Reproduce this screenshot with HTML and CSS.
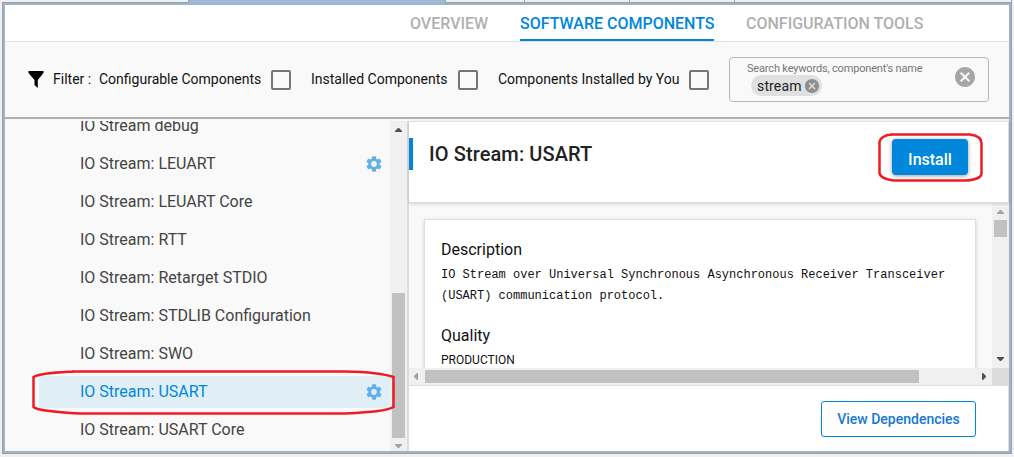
FILE: index.html
```html
<!DOCTYPE html>
<html lang="en">
<head>
<meta charset="utf-8">
<title>Software Components</title>
<link rel="stylesheet" href="styles.css">
</head>
<body>
<svg width="0" height="0" class="defs">
  <symbol id="gear" viewBox="2 2 20 20"><path d="M19.14 12.94c.04-.3.06-.61.06-.94 0-.32-.02-.64-.07-.94l2.03-1.58c.18-.14.23-.41.12-.61l-1.92-3.32c-.12-.22-.37-.29-.59-.22l-2.39.96c-.5-.38-1.03-.7-1.62-.94l-.36-2.54c-.04-.24-.24-.41-.48-.41h-3.84c-.24 0-.43.17-.47.41l-.36 2.54c-.59.24-1.13.57-1.62.94l-2.39-.96c-.22-.08-.47 0-.59.22L2.74 8.87c-.12.21-.08.47.12.61l2.03 1.58c-.05.3-.09.63-.09.94s.02.64.07.94l-2.03 1.58c-.18.14-.23.41-.12.61l1.92 3.32c.12.22.37.29.59.22l2.39-.96c.5.38 1.03.7 1.62.94l.36 2.54c.05.24.24.41.48.41h3.84c.24 0 .44-.17.47-.41l.36-2.54c.59-.24 1.13-.56 1.62-.94l2.39.96c.22.08.47 0 .59-.22l1.92-3.32c.12-.22.07-.47-.12-.61l-2.01-1.58zM12 15.6c-1.98 0-3.6-1.62-3.6-3.6s1.62-3.6 3.6-3.6 3.6 1.62 3.6 3.6-1.62 3.6-3.6 3.6z"/></symbol>
  <symbol id="cancel" viewBox="2 2 20 20"><path d="M12 2C6.47 2 2 6.47 2 12s4.47 10 10 10 10-4.47 10-10S17.53 2 12 2zm5 13.59L15.59 17 12 13.41 8.41 17 7 15.59 10.59 12 7 8.41 8.41 7 12 10.59 15.59 7 17 8.41 13.41 12 17 15.59z"/></symbol>
</svg>
<div class="tabstrip"><i class="t1"></i><i class="t2"></i><i class="t3"></i><i class="t4"></i><i class="t5"></i><i class="t6"></i></div>
<div class="window">
  <nav class="nav">
    <a class="tab overview">OVERVIEW</a>
    <a class="tab active">SOFTWARE COMPONENTS</a>
    <a class="tab config">CONFIGURATION TOOLS</a>
  </nav>
  <section class="filters">
    <svg class="funnel" width="16" height="17" viewBox="0 0 16 17"><path d="M.5 0h15v2L9.800 9v8L6.500 14V9L.5 2z"/></svg>
    <span class="label f0">Filter :</span>
    <span class="label f1">Configurable Components</span><span class="box"></span>
    <span class="label f2">Installed Components</span><span class="box"></span>
    <span class="label f3">Components Installed by You</span><span class="box"></span>
    <div class="search">
      <div class="field">
        <span class="hint">Search keywords, component's name</span>
        <span class="chip">stream<svg width="14" height="14"><use href="#cancel"/></svg></span>
      </div>
      <svg class="clear" width="20" height="20"><use href="#cancel"/></svg>
    </div>
  </section>
  <div class="content">
    <aside class="tree">
      <div class="rows">
        <div class="row"><span>IO Stream debug</span></div>
        <div class="row"><span>IO Stream: LEUART</span><svg width="16" height="16"><use href="#gear"/></svg></div>
        <div class="row"><span>IO Stream: LEUART Core</span></div>
        <div class="row"><span>IO Stream: RTT</span></div>
        <div class="row"><span>IO Stream: Retarget STDIO</span></div>
        <div class="row"><span>IO Stream: STDLIB Configuration</span></div>
        <div class="row"><span>IO Stream: SWO</span></div>
        <div class="row selected"><span>IO Stream: USART</span><svg width="16" height="16"><use href="#gear"/></svg></div>
        <div class="row"><span>IO Stream: USART Core</span></div>
      </div>
      <div class="vbar">
        <svg width="17" height="17" fill="#505050"><path d="M5 11v-1l3-3h1l3 3v1z"/></svg>
        <div class="thumb tree-thumb"></div>
        <svg width="17" height="13" fill="#a3a3a3"><path d="M5 6v1l3 3h1l3-3v-1z"/></svg>
      </div>
    </aside>
    <main class="detail">
      <header class="title">
        <h1>IO Stream: USART</h1>
        <button class="install">Install</button>
      </header>
      <div class="scroller">
        <div class="view">
          <article class="card">
            <h2>Description</h2>
            <p class="mono">IO Stream over Universal Synchronous Asynchronous Receiver Transceiver<br>(USART) communication protocol.</p>
            <h2 class="quality">Quality</h2>
            <p class="value">PRODUCTION</p>
          </article>
        </div>
        <div class="vbar">
          <svg width="17" height="17" fill="#a3a3a3"><path d="M5 11v-1l3-3h1l3 3v1z"/></svg>
          <div class="thumb view-thumb"></div>
          <svg class="end" width="17" height="17" fill="#505050"><path d="M5 6v1l3 3h1l3-3v-1z"/></svg>
        </div>
        <div class="hbar">
          <svg width="17" height="17" fill="#a3a3a3"><path d="M9 5h-1l-3 3v1l3 3h1z"/></svg>
          <div class="hthumb"></div>
          <svg class="right" width="17" height="17" fill="#505050"><path d="M7 5h1l3 3v1l-3 3h-1z"/></svg>
        </div>
        <div class="corner"></div>
      </div>
      <footer class="footer"><button class="deps">View Dependencies</button></footer>
    </main>
  </div>
</div>
<svg class="marks" width="1014" height="457" viewBox="0 0 1014 457">
  <path d="M890 134.500H970C977 135.500 981.500 138 981.500 143V174C981 177 976 180 966 180.500H894C886 179.500 880 177 879.500 173V142C880 138 885 134.500 893 134.500"/>
  <path d="M72 371.500H345C370 372 385 374 393.500 377V407C387 411 370 412 345 413.500H80C60 412.500 38 411 33.500 407V377C40 373 57 372.500 74 371.500"/>
</svg>
</body>
</html>
```

FILE: styles.css
```css
* { box-sizing: border-box; }
body { margin: 0; width: 1014px; height: 457px; overflow: hidden; background: #f0f0f0; font-family: Roboto, sans-serif; color: #222; }
.defs { display: block; position: absolute; }
.tabstrip { display: flex; height: 3px; margin: 0 2px; }
.tabstrip i { height: 3px; border-bottom: 1px solid #a0a0a0; border-right: 1px solid #a0a0a0; }
.tabstrip .t1 { width: 187px; }
.tabstrip .t2 { width: 257px; background: #9fbad5; border-color: #9fbad5; border-right-color: #a0a0a0; }
.tabstrip .t3 { width: 79px; }
.tabstrip .t4 { width: 105px; }
.tabstrip .t5 { width: 105px; }
.tabstrip .t6 { flex: 1; }
.window { width: 1010px; height: 451px; margin-left: 2px; padding: 2px 3px 3px; border-bottom: 1px solid #a0a0a0; background: linear-gradient(90deg, #a0a0a0 1px, #99b4d1 1px, #99b4d1 1009px, #a0a0a0 1009px); }
.nav { display: flex; height: 37px; background: #fff; border-bottom: 1px solid #e0e0e0; padding-left: 405px; }
.tab { height: 36px; line-height: 37px; font-size: 16px; font-weight: 500; color: #b0b0b0; white-space: nowrap; }
.overview { width: 110px; }
.active { width: 194px; color: #0087dc; border-bottom: 2px solid #0087dc; }
.config { margin-left: 32px; }
.filters { display: flex; height: 77px; background: #f9f9f9; border-bottom: 2px solid #b0b0b0; padding-left: 23px; }
.funnel { margin-top: 29px; }
.label { font-size: 14px; line-height: 16px; margin-top: 29px; color: #111; white-space: nowrap; }
.f0 { width: 46px; margin-left: 9px; }
.f1 { width: 172px; }
.f2 { width: 147px; margin-left: 20px; }
.f3 { width: 191px; margin-left: 20px; }
.box { width: 20px; height: 20px; margin-top: 28px; border: 2px solid #757575; border-radius: 2px; background: #fafafa; }
.search { display: flex; width: 260px; height: 45px; margin: 15px 0 0 20px; border: 1px solid #b8b8b8; border-radius: 4px; }
.field { display: flex; flex-direction: column; align-items: flex-start; width: 225px; padding: 4px 0 0 17px; }
.hint { font-size: 11px; line-height: 13px; letter-spacing: -.17px; color: #777; white-space: nowrap; }
.chip { display: flex; align-items: center; width: 71px; height: 21px; margin-left: 4px; padding-left: 6px; border-radius: 11px; background: #e0e0e0; font-size: 14px; letter-spacing: .15px; color: #222; }
.chip svg { margin-left: 3px; fill: #8e8e8e; }
.clear { margin-top: 9px; fill: #a6a6a6; }
.content { display: flex; height: 332px; background: #f9f9f9; }
.tree { display: flex; width: 404px; height: 330px; margin-top: 2px; overflow: hidden; border-right: 2px solid #dcdcdc; }
.rows { display: flex; flex-direction: column; gap: 6px; width: 385px; margin-top: -11px; padding-left: 34px; }
.row { display: flex; justify-content: space-between; flex: none; height: 32px; padding: 0 8px 0 41px; font-size: 16px; line-height: 31px; color: #444; white-space: nowrap; }
.row svg { margin-top: 8px; fill: #62b1e6; }
.selected { background: #e0eef6; color: #0087dc; }
.vbar { display: flex; flex-direction: column; width: 17px; background: #f0f0f0; }
.vbar svg, .hbar svg { flex: none; }
.thumb { width: 13px; margin-left: 2px; background: #c1c1c1; }
.tree-thumb { height: 145px; margin-top: 155px; }
.detail { width: 600px; height: 330px; margin-top: 2px; }
.title { display: flex; justify-content: space-between; position: relative; width: 600px; height: 82px; background: #fff; border: solid #dedede; border-width: 1px 1px 1px 0; box-shadow: 0 1px 3px rgba(0,0,0,.16); padding: 16px 40px 0 0; }
.title h1 { height: 32px; margin: 0; padding-left: 16px; border-left: 4px solid #0087dc; font-size: 20px; line-height: 32px; font-weight: 500; letter-spacing: .1px; }
.install { width: 76px; height: 36px; margin-top: 1px; padding: 5px 0 0; border: 0; border-radius: 4px; background: #0087dc; box-shadow: 0 1px 4px rgba(0,0,0,.4); color: #fff; font: 500 16px Roboto, sans-serif; }
.scroller { display: grid; grid-template: 165px 17px / 583px 17px; }
.view { overflow: hidden; padding: 16px 16px 0 15px; }
.card { width: 552px; height: 230px; padding: 20px 16px; background: #fff; border: 1px solid #dedede; box-shadow: 0 1px 4px rgba(0,0,0,.16); }
.card h2 { margin: 0; font-size: 16px; line-height: 20px; font-weight: 400; color: #111; }
.mono { margin: 5px 0 0; font: 12px/21px "Liberation Mono", monospace; color: #111; white-space: nowrap; }
.card .quality { margin-top: 19px; }
.value { margin: 6px 0 0; font-size: 12px; line-height: 16px; color: #111; }
.view-thumb { height: 17px; }
.end { margin-top: auto; }
.hbar { display: flex; background: #f0f0f0; }
.hthumb { width: 494px; height: 13px; margin: 2px 0 0 -1px; background: #c1c1c1; }
.right { margin-left: auto; }
.corner { background: #dcdcdc; }
.footer { display: flex; justify-content: flex-end; height: 66px; background: #fff; border-top: 1px solid #dedede; border-right: 1px solid #dedede; padding: 15px 32px 0 0; }
.deps { width: 155px; height: 36px; padding: 0 0 1px; border: 1px solid #0087dc; border-radius: 3px; background: #fff; color: #1976d2; font: 500 14px Roboto, sans-serif; }
.marks { position: absolute; left: 0; top: 0; fill: none; stroke: #ed1c24; stroke-width: 2.500; }
```
